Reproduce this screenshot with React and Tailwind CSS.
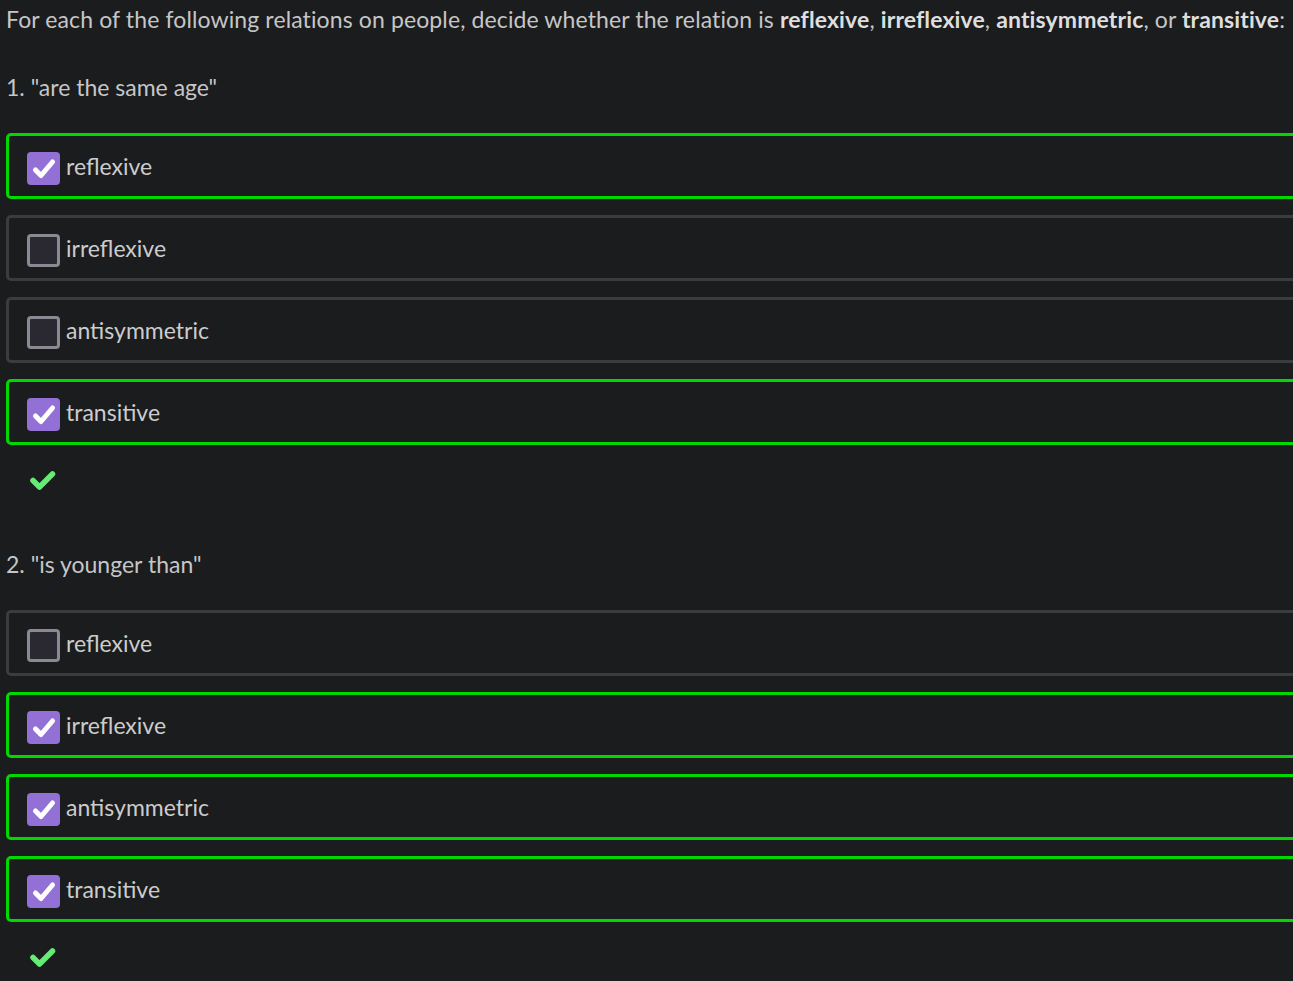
import React from 'react';

const questions = [
    {
        title: '1. "are the same age"',
        options: [
            { label: 'reflexive', checked: true },
            { label: 'irreflexive', checked: false },
            { label: 'antisymmetric', checked: false },
            { label: 'transitive', checked: true },
        ],
    },
    {
        title: '2. "is younger than"',
        options: [
            { label: 'reflexive', checked: false },
            { label: 'irreflexive', checked: true },
            { label: 'antisymmetric', checked: true },
            { label: 'transitive', checked: true },
        ],
    },
];

const Checkbox = ({ checked }) => {
    if (checked) {
        return (
            <div className="w-[33px] h-[33px] rounded-[4px] bg-[#9370d6] flex items-center justify-center shrink-0">
                <svg width="26" height="26" viewBox="0 0 26 26">
                    <path d="M4.5 14 L10 19.5 L21.5 6" fill="none" stroke="#ffffff" strokeWidth="5" strokeLinecap="round" strokeLinejoin="round" />
                </svg>
            </div>
        );
    }
    return <div className="w-[33px] h-[33px] rounded-[4px] bg-[#2a2931] border-[3px] border-[#8b8992] shrink-0"></div>;
};

const Option = ({ label, checked }) => (
    <div
        className={`h-[66px] w-[1320px] rounded-[5px] border-[3px] flex items-center pl-[18px] ${
            checked ? 'border-[#00d900]' : 'border-[#3b3c40]'
        }`}
    >
        <div className="mt-[5px]">
            <Checkbox checked={checked} />
        </div>
        <span className="ml-[6px] text-[23px] text-[#cccccc]">{label}</span>
    </div>
);

const GreenCheck = () => (
    <svg width="28" height="24" viewBox="0 0 28 24">
        <path d="M4 11.5 L10.5 18 L23.5 5" fill="none" stroke="#64ec74" strokeWidth="5.5" strokeLinecap="round" strokeLinejoin="round" />
    </svg>
);

export default function App() {
    return (
        <div
            className="w-[1293px] h-[981px] overflow-hidden bg-[#1b1c1e] text-[#c6c6c6] pl-[6px]"
            style={{ fontFamily: 'Lato, "Liberation Sans", sans-serif' }}
        >
            <div className="h-[38px] flex items-center text-[23px] tracking-[0.12px] whitespace-nowrap">
                <span>
                    For each of the following relations on people, decide whether the relation is{' '}
                    <b className="text-[#dedede]">reflexive</b>, <b className="text-[#dedede]">irreflexive</b>,{' '}
                    <b className="text-[#dedede]">antisymmetric</b>, or <b className="text-[#dedede]">transitive</b>:
                </span>
            </div>
            {questions.map((q, i) => (
                <div key={i} className={i === 0 ? 'mt-[30px]' : 'mt-[52px]'}>
                    <div className="h-[38px] flex items-center text-[23px]">{q.title}</div>
                    <div className="mt-[27px] flex flex-col gap-[16px]">
                        {q.options.map((o) => (
                            <Option key={o.label} {...o} />
                        ))}
                    </div>
                    <div className="mt-[24px] h-[24px] flex items-center pl-[23px]">
                        <GreenCheck />
                    </div>
                </div>
            ))}
        </div>
    );
}
